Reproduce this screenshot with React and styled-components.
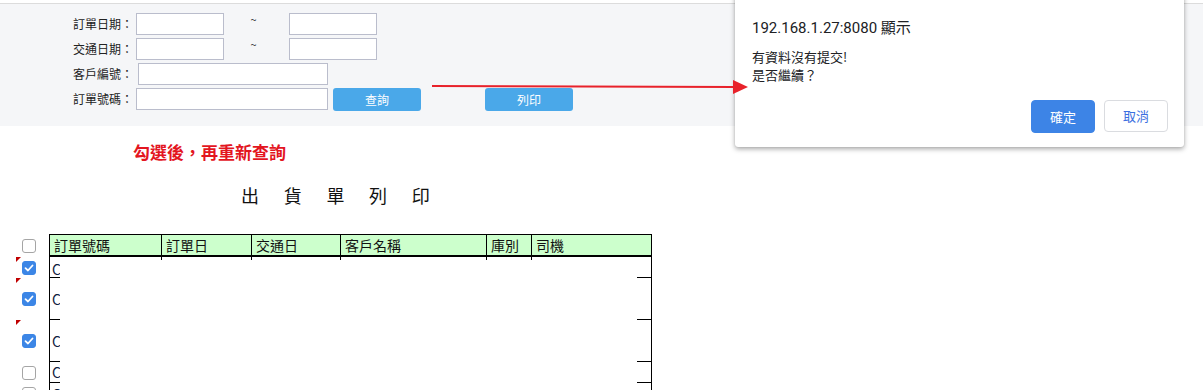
import styled, { createGlobalStyle } from "styled-components";

const GlobalStyle = createGlobalStyle`
  html, body {
    margin: 0;
    padding: 0;
    background: #fff;
  }
  body {
    font-family: "Noto Sans CJK TC", "Noto Sans", sans-serif;
    color: #333;
  }
`;

const Page = styled.div`
  position: relative;
  width: 1203px;
  height: 390px;
  overflow: hidden;
`;

const TopBar = styled.div`
  margin-top: 3px;
  height: 123px;
  border-top: 1px solid #dcdcdc;
  background: #f5f6f8;
  box-sizing: border-box;
  padding-top: 9px;
`;

const FormRow = styled.div`
  display: flex;
  align-items: center;
  height: 22px;
  margin-bottom: ${(p) => (p.$last ? 0 : "3px")};
  margin-top: ${(p) => (p.$last ? "1px" : 0)};
`;

const Label = styled.label`
  width: 133px;
  text-align: right;
  font-size: 12px;
  line-height: 22px;
  color: #222;
  padding-right: ${(p) => p.$pad || 3}px;
`;

const Input = styled.div`
  width: ${(p) => p.$w}px;
  height: 22px;
  box-sizing: border-box;
  border: 1px solid #babdcc;
  background: #fff;
`;

const Tilde = styled.span`
  width: 65px;
  align-self: flex-start;
  text-align: center;
  font-size: 11px;
  line-height: 12px;
  color: #333;
  padding-right: 6px;
  box-sizing: border-box;
`;

const Button = styled.div`
  width: 88px;
  height: 23px;
  margin-left: ${(p) => p.$ml}px;
  border-radius: 3px;
  background: #4aa8e9;
  color: #fff;
  font-size: 12px;
  line-height: 23px;
  text-align: center;
`;

const Notice = styled.div`
  margin: 16px 0 0 133px;
  font-size: 17px;
  line-height: 20px;
  font-weight: bold;
  color: #e3161f;
`;

const Title = styled.div`
  margin: 21px 0 0 241px;
  font-size: 18px;
  line-height: 24px;
  letter-spacing: 24.7px;
  color: #111;
`;

const TableArea = styled.div`
  margin-top: 27px;
  padding-left: 16px;
`;

const Row = styled.div`
  display: flex;
  height: ${(p) => p.$h}px;
`;

const MarkCell = styled.div`
  position: relative;
  width: 33px;
  display: flex;
  align-items: center;
  padding-left: 6px;
  box-sizing: border-box;
`;

const Corner = styled.span`
  position: absolute;
  top: 0;
  left: 0;
  width: 0;
  height: 0;
  border-top: 5px solid #c00000;
  border-right: 5px solid transparent;
`;

const CheckBox = styled.span`
  display: flex;
  align-items: center;
  justify-content: center;
  width: 14px;
  height: 14px;
  box-sizing: border-box;
  border-radius: 3px;
  border: 1px solid ${(p) => (p.$on ? "#3c86e6" : "#a5a5a5")};
  background: ${(p) => (p.$on ? "#3c86e6" : "#fff")};
`;

const Check = ({ on }) => (
  <CheckBox $on={on}>
    {on && (
      <svg width="10" height="10" viewBox="0 0 10 10">
        <path
          d="M1.5 5.2 L4 7.5 L8.5 2.5"
          fill="none"
          stroke="#fff"
          strokeWidth="1.8"
          strokeLinecap="round"
          strokeLinejoin="round"
        />
      </svg>
    )}
  </CheckBox>
);

const HeadRow = styled.div`
  display: grid;
  grid-template-columns: 112px 90px 89px 146px 45px 121px;
  width: 603px;
  border-top: 1px solid #000;
  border-bottom: 2px solid #000;
  background: #ccffcc;
  box-sizing: border-box;
`;

const HeadCell = styled.div`
  border-left: 1px solid #000;
  border-right: ${(p) => (p.$end ? "1px solid #000" : "none")};
  padding-left: 4px;
  font-size: 14px;
  line-height: 20px;
  color: #111;
  white-space: nowrap;
  overflow: hidden;
`;

const TickRow = styled.div`
  display: grid;
  grid-template-columns: 112px 90px 89px 146px 45px 121px;
  width: 603px;
  height: 3px;
`;

const Tick = styled.div`
  border-left: 1px solid #000;
  border-right: ${(p) => (p.$end ? "1px solid #000" : "none")};
`;

const BodyRow = styled.div`
  display: flex;
  width: 603px;
  height: 100%;
`;

const FirstCell = styled.div`
  width: 11px;
  border-left: 1px solid #000;
  border-bottom: ${(p) => (p.$open ? "none" : "1px solid #000")};
  box-sizing: border-box;
  overflow: hidden;
  display: flex;
  align-items: center;
  padding-left: 2px;
  font-size: 14px;
  color: #102040;
`;

const Masked = styled.div`
  flex: 1;
  background: #fff;
`;

const LastCell = styled.div`
  width: 15px;
  border-right: 1.5px solid #000;
  border-bottom: ${(p) => (p.$open ? "none" : "1px solid #000")};
  box-sizing: border-box;
`;

const Arrow = styled.svg`
  position: absolute;
  left: 430px;
  top: 78px;
  z-index: 3;
`;

const Dialog = styled.div`
  position: absolute;
  top: -8px;
  left: 735px;
  width: 449px;
  height: 155px;
  box-sizing: border-box;
  padding: 26px 16px 0 17px;
  background: #fff;
  border-radius: 0 0 3px 3px;
  box-shadow: 0 2px 5px rgba(0, 0, 0, 0.35), 0 0 1px rgba(0, 0, 0, 0.2);
  z-index: 2;
`;

const DialogTitle = styled.div`
  font-family: Roboto, "Noto Sans CJK TC", sans-serif;
  font-size: 15px;
  line-height: 20px;
  color: #202124;
`;

const Message = styled.div`
  margin-top: 10px;
  font-size: 13px;
  line-height: 18px;
  color: #202124;
`;

const DialogButtons = styled.div`
  display: flex;
  justify-content: flex-end;
  align-items: flex-start;
  gap: 9px;
  margin-top: 16px;
`;

const DialogButton = styled.div`
  width: 64px;
  height: ${(p) => (p.$primary ? 33 : 32)}px;
  box-sizing: border-box;
  border-radius: 4px;
  border: 1px solid ${(p) => (p.$primary ? "#3d84e6" : "#dadce0")};
  background: ${(p) => (p.$primary ? "#3d84e6" : "#fff")};
  color: ${(p) => (p.$primary ? "#fff" : "#3b6fe0")};
  font-size: 13px;
  line-height: ${(p) => (p.$primary ? 31 : 30)}px;
  text-align: center;
`;

const columns = ["訂單號碼", "訂單日", "交通日", "客戶名稱", "庫別", "司機"];

const rows = [
  { h: 21, mark: true, checked: true, tick: true },
  { h: 42, mark: true, checked: true },
  { h: 42, mark: true, checked: true },
  { h: 21, checked: false },
  { h: 21, checked: false, open: true },
];

const App = () => {
  return (
    <>
      <GlobalStyle />
      <Page>
        <TopBar>
          <FormRow>
            <Label>訂單日期：</Label>
            <Input $w={88} />
            <Tilde>~</Tilde>
            <Input $w={88} />
          </FormRow>
          <FormRow>
            <Label>交通日期：</Label>
            <Input $w={88} />
            <Tilde>~</Tilde>
            <Input $w={88} />
          </FormRow>
          <FormRow>
            <Label $pad={5}>客戶編號：</Label>
            <Input $w={190} />
          </FormRow>
          <FormRow $last>
            <Label>訂單號碼：</Label>
            <Input $w={192} />
            <Button $ml={5}>查詢</Button>
            <Button $ml={64}>列印</Button>
          </FormRow>
        </TopBar>

        <Notice>勾選後，再重新查詢</Notice>
        <Title>出貨單列印</Title>

        <TableArea>
          <Row $h={23}>
            <MarkCell>
              <Check on={false} />
            </MarkCell>
            <HeadRow>
              {columns.map((c, i) => (
                <HeadCell key={c} $end={i === columns.length - 1}>
                  {c}
                </HeadCell>
              ))}
            </HeadRow>
          </Row>
          {rows.map((r, i) => (
            <Row key={i} $h={r.h}>
              <MarkCell>
                {r.mark && <Corner />}
                <Check on={r.checked} />
              </MarkCell>
              <div>
                {r.tick && (
                  <TickRow>
                    {columns.map((c, j) => (
                      <Tick key={c} $end={j === columns.length - 1} />
                    ))}
                  </TickRow>
                )}
                <BodyRow style={{ height: r.tick ? r.h - 3 : r.h }}>
                  <FirstCell $open={r.open}>C</FirstCell>
                  <Masked />
                  <LastCell $open={r.open} />
                </BodyRow>
              </div>
            </Row>
          ))}
        </TableArea>

        <Arrow width="320" height="18" viewBox="0 0 320 18">
          <line x1="2" y1="8" x2="305" y2="9" stroke="#e8222b" strokeWidth="2" />
          <polygon points="303,2 318,9 303,16" fill="#e8222b" />
        </Arrow>

        <Dialog>
          <DialogTitle>192.168.1.27:8080 顯示</DialogTitle>
          <Message>
            有資料沒有提交!
            <br />
            是否繼續？
          </Message>
          <DialogButtons>
            <DialogButton $primary>確定</DialogButton>
            <DialogButton>取消</DialogButton>
          </DialogButtons>
        </Dialog>
      </Page>
    </>
  );
};

export default App;
